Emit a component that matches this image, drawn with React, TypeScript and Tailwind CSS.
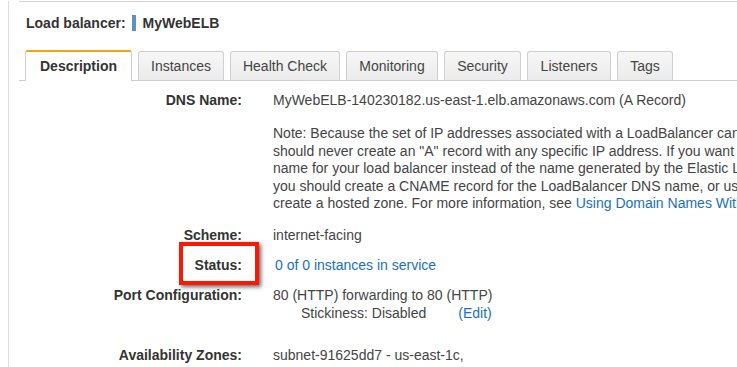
import React from "react";

const tabs = [
  { name: "Description", w: "w-[107px]", active: true },
  { name: "Instances", w: "w-[86px]" },
  { name: "Health Check", w: "w-[110px]" },
  { name: "Monitoring", w: "w-[92px]" },
  { name: "Security", w: "w-[77px]" },
  { name: "Listeners", w: "w-[84px]" },
  { name: "Tags", w: "w-[56px]" },
];

function Row({
  label,
  children,
  className = "",
  leading = "leading-[18px]",
}: {
  label?: string;
  children: React.ReactNode;
  className?: string;
  leading?: string;
}) {
  return (
    <div className={`flex ${leading} ${className}`}>
      <div className="w-[223px] shrink-0 text-right font-bold text-[#333]">{label}</div>
      <div className="ml-[31px] whitespace-nowrap text-[#444]">{children}</div>
    </div>
  );
}

export default function App() {
  return (
    <div className="relative h-[367px] w-[737px] overflow-hidden bg-white font-['Liberation_Sans',Arial,sans-serif] text-[14px]">
      <div className="ml-2 h-full border-l border-[#dcdcdc] pl-[10px]">
        <div className="mt-[1px] border-t border-[#d4d4d4]">
          <div className="flex items-center pl-[7px] pt-[12px] font-bold text-[#333] leading-[18px]">
            <span>Load balancer:</span>
            <span className="ml-[6px] h-[16px] w-[4px] bg-[#5b92cc]" />
            <span className="ml-[7px]">MyWebELB</span>
          </div>
          <div className="mt-[18px] flex h-[31px] items-end gap-[6px] border-b border-[#cfcfcf] pl-[6px]">
            {tabs.map((t) =>
              t.active ? (
                <div
                  key={t.name}
                  className={`${t.w} -mb-px flex h-[31px] items-center justify-center rounded-t-[3px] border-x border-t-2 border-x-[#cfcfcf] border-t-[#f7a21b] bg-white font-bold text-[#333]`}
                >
                  {t.name}
                </div>
              ) : (
                <div
                  key={t.name}
                  className={`${t.w} flex h-[29px] items-center justify-center rounded-t-[3px] border border-b-0 border-[#cfcfcf] bg-gradient-to-b from-[#f7f7f7] to-[#ebebeb] text-[#444]`}
                >
                  {t.name}
                </div>
              )
            )}
          </div>
          <div className="pt-[10px]">
            <Row label="DNS Name:">MyWebELB-140230182.us-east-1.elb.amazonaws.com (A Record)</Row>
            <Row className="mt-[16px]" leading="leading-[17.5px]">
              Note: Because the set of IP addresses associated with a LoadBalancer can change over time,
              <br />
              should never create an "A" record with any specific IP address. If you want to use a friendly DNS
              <br />
              name for your load balancer instead of the name generated by the Elastic Load Balancing service,
              <br />
              you should create a CNAME record for the LoadBalancer DNS name, or use Amazon Route 53 to
              <br />
              create a hosted zone. For more information, see{" "}
              <span className="text-[#1a6fc4]">Using Domain Names With Elastic Load Balancing</span>
            </Row>
            <Row label="Scheme:" className="mt-[13px]">internet-facing</Row>
            <Row label="Status:" className="mt-[12px]">
              <span className="ml-[2px] text-[#1a6fc4]">0 of 0 instances in service</span>
            </Row>
            <Row label="Port Configuration:" className="mt-[12px]">
              80 (HTTP) forwarding to 80 (HTTP)
              <div className="flex pl-[28px]">
                <span>Stickiness: Disabled</span>
                <span className="ml-[32px] text-[#1a6fc4]">(Edit)</span>
              </div>
            </Row>
            <Row label="Availability Zones:" className="mt-[24px]">subnet-91625dd7 - us-east-1c,</Row>
          </div>
        </div>
      </div>
      <div className="absolute left-[179px] top-[242px] h-[43px] w-[80px] border-4 border-[#f81a05] shadow-[2px_2px_4px_rgba(0,0,0,0.6)]" />
    </div>
  );
}
